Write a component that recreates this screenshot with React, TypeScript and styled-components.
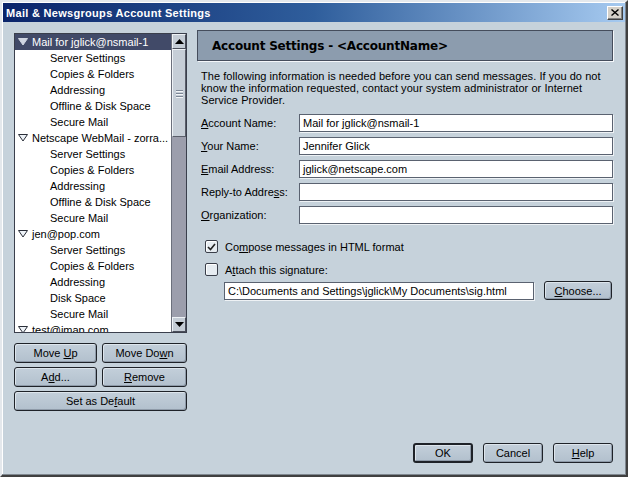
import React from "react";
import styled, { createGlobalStyle, css } from "styled-components";

const Global = createGlobalStyle`
  html, body { margin: 0; padding: 0; background: #c6d2db; }
  body { font-family: "Liberation Sans", Arial, sans-serif; font-size: 11px; color: #000; }
  * { box-sizing: border-box; }
`;

const FONT = `"Liberation Sans", Arial, sans-serif`;

const Frame = styled.div`
  width: 628px;
  height: 477px;
  display: flex;
  flex-direction: column;
  padding: 1px;
  border-style: solid;
  border-width: 2px;
  border-color: #e4e8ec #404040 #404040 #e4e8ec;
  box-shadow: inset -1px -1px 0 #808890, inset 1px 1px 0 #ffffff;
  background-color: #c6d2db;
  background-image: radial-gradient(rgba(255,255,255,0.18) 0.5px, transparent 0.6px);
  background-size: 2px 2px;
`;

const TitleBar = styled.div`
  height: 19px;
  flex: none;
  display: flex;
  align-items: center;
  justify-content: space-between;
  padding: 0 2px 0 3px;
  background: linear-gradient(90deg, #0a246a 0%, #2f5e9c 50%, #a6caf0 100%);
`;

const TitleText = styled.span`
  color: #fff;
  font-family: ${FONT};
  font-weight: bold;
  font-size: 11px;
  letter-spacing: 0.3px;
`;

const CloseBtn = styled.div`
  width: 16px;
  height: 14px;
  background: #d4d0c8;
  border-style: solid;
  border-width: 1px;
  border-color: #fff #404040 #404040 #fff;
  box-shadow: inset -1px -1px 0 #808080;
  display: flex;
  align-items: center;
  justify-content: center;
`;

const Body = styled.div`
  flex: 1;
  display: grid;
  grid-template-columns: 173px 1fr;
  column-gap: 10px;
  padding: 8px 12px 11px 11px;
  min-height: 0;
`;

const LeftCol = styled.div`
  display: flex;
  flex-direction: column;
  padding-top: 3px;
`;

const Tree = styled.div`
  height: 300px;
  border: 1px solid #3a3f4c;
  background: #fff;
  display: flex;
  overflow: hidden;
`;

const TreeRows = styled.div`
  flex: 1;
  display: flex;
  flex-direction: column;
  min-width: 0;
`;

const Row = styled.div<{ $level: number; $selected?: boolean }>`
  height: 16px;
  flex: none;
  display: flex;
  align-items: center;
  white-space: nowrap;
  font-family: ${FONT};
  font-size: 11px;
  padding-left: ${(p) => (p.$level === 0 ? 3 : 35)}px;
  ${(p) =>
    p.$selected &&
    css`
      background: #414a68;
      color: #fff;
    `}
`;

const Twisty = styled.svg`
  width: 10px;
  height: 8px;
  margin-right: 4px;
  flex: none;
`;

const ScrollBar = styled.div`
  width: 15px;
  flex: none;
  display: flex;
  flex-direction: column;
  background: #9c9eac;
  border-left: 1px solid #6c707c;
`;

const ScrollArrow = styled.div`
  height: 15px;
  flex: none;
  background: #c4ccd5;
  border-style: solid;
  border-width: 1px;
  border-color: #eef2f6 #4a4e5a #4a4e5a #eef2f6;
  display: flex;
  align-items: center;
  justify-content: center;
`;

const Thumb = styled.div`
  height: 88px;
  flex: none;
  background: #c6ced7;
  border-style: solid;
  border-width: 1px;
  border-color: #eef2f6 #5a5e6a #5a5e6a #eef2f6;
  display: flex;
  flex-direction: column;
  align-items: center;
  justify-content: center;
  gap: 2px;
`;

const Grip = styled.div`
  width: 7px;
  height: 1px;
  background: #7d8796;
  box-shadow: 0 1px 0 #f4f6f8;
`;

const Track = styled.div`
  flex: 1;
`;

const ButtonGrid = styled.div`
  margin-top: 10px;
  display: grid;
  grid-template-columns: 83px 85px;
  column-gap: 5px;
  row-gap: 4px;
`;

const Button = styled.button<{ $wide?: boolean; $default?: boolean }>`
  height: 20px;
  padding: 0;
  font-family: ${FONT};
  font-size: 11px;
  color: #000;
  background: linear-gradient(#c3cfda, #b2c0cd);
  border: 1px solid #1e2228;
  border-radius: 3px;
  box-shadow: inset 1px 1px 0 #dde5ec, inset -1px -1px 0 #8e9aa8;
  ${(p) => p.$wide && css`grid-column: 1 / span 2;`}
  ${(p) =>
    p.$default &&
    css`
      border-width: 2px;
    `}
  u { text-decoration: underline; }
`;

const RightCol = styled.div`
  display: flex;
  flex-direction: column;
`;

const Header = styled.div`
  height: 31px;
  flex: none;
  background: #8c9cae;
  border: 1px solid #454d5c;
  box-shadow: 1px 1px 0 #f4f7fa;
  display: flex;
  align-items: center;
  padding-left: 14px;
  font-family: "DejaVu Sans", Verdana, sans-serif;
  font-weight: bold;
  font-size: 12px;
  letter-spacing: -0.2px;
  color: #000;
`;

const Desc = styled.p`
  margin: 9px 0 0 4px;
  font-family: ${FONT};
  font-size: 11px;
  line-height: 12px;
  letter-spacing: 0.05px;
`;

const Form = styled.div`
  margin: 8px 0 0 4px;
  display: grid;
  grid-template-columns: 98px 1fr;
  row-gap: 5px;
  align-items: center;
`;

const Label = styled.label`
  font-family: ${FONT};
  font-size: 11px;
  white-space: nowrap;
`;

const TextBox = styled.div<{ $w?: number }>`
  height: 18px;
  ${(p) => (p.$w ? css`width: ${p.$w}px;` : "")}
  background: #fff;
  border: 1px solid #5a6270;
  box-shadow: 1px 1px 0 #eef2f5;
  display: flex;
  align-items: center;
  padding-left: 3px;
  font-family: ${FONT};
  font-size: 11px;
  white-space: nowrap;
  overflow: hidden;
`;

const Checks = styled.div`
  margin: 16px 0 0 8px;
  display: flex;
  flex-direction: column;
  gap: 10px;
`;

const CheckRow = styled.div`
  display: flex;
  align-items: center;
  gap: 7px;
  font-family: ${FONT};
  font-size: 11px;
`;

const Box = styled.div`
  width: 13px;
  height: 13px;
  background: #e6ecf1;
  border: 1px solid #3a3f4a;
  border-radius: 2px;
  box-shadow: inset 1px 1px 0 #fff;
  display: flex;
  align-items: center;
  justify-content: center;
`;

const SigRow = styled.div`
  margin: 5px 0 0 27px;
  display: flex;
  align-items: center;
  gap: 10px;
`;

const ChooseBtn = styled(Button)`
  width: 68px;
  height: 19px;
`;

const Footer = styled.div`
  margin-top: auto;
  display: flex;
  justify-content: flex-end;
  gap: 10px;
`;

const FooterBtn = styled(Button)`
  width: 60px;
`;

const Tri = ({ sel }: { sel?: boolean }) => (
  <Twisty viewBox="0 0 10 8">
    <polygon
      points="0.5,0.5 9.5,0.5 5,7"
      fill={sel ? "#d0d6e2" : "#eef3f8"}
      stroke={sel ? "#d0d6e2" : "#2a2e38"}
      strokeWidth="1"
    />
  </Twisty>
);

type Item = { t: string; l: number; sel?: boolean };
const items: Item[] = [
  { t: "Mail for jglick@nsmail-1", l: 0, sel: true },
  { t: "Server Settings", l: 1 },
  { t: "Copies & Folders", l: 1 },
  { t: "Addressing", l: 1 },
  { t: "Offline & Disk Space", l: 1 },
  { t: "Secure Mail", l: 1 },
  { t: "Netscape WebMail - zorra...", l: 0 },
  { t: "Server Settings", l: 1 },
  { t: "Copies & Folders", l: 1 },
  { t: "Addressing", l: 1 },
  { t: "Offline & Disk Space", l: 1 },
  { t: "Secure Mail", l: 1 },
  { t: "jen@pop.com", l: 0 },
  { t: "Server Settings", l: 1 },
  { t: "Copies & Folders", l: 1 },
  { t: "Addressing", l: 1 },
  { t: "Disk Space", l: 1 },
  { t: "Secure Mail", l: 1 },
  { t: "test@imap.com", l: 0 },
];

export default function App() {
  return (
    <>
      <Global />
      <Frame>
        <TitleBar>
          <TitleText>Mail &amp; Newsgroups Account Settings</TitleText>
          <CloseBtn>
            <svg width="8" height="7" viewBox="0 0 8 7">
              <path d="M0.5 0.5 L7.5 6.5 M7.5 0.5 L0.5 6.5" stroke="#000" strokeWidth="1.4" />
            </svg>
          </CloseBtn>
        </TitleBar>
        <Body>
          <LeftCol>
            <Tree>
              <TreeRows>
                {items.map((it, i) => (
                  <Row key={i} $level={it.l} $selected={it.sel}>
                    {it.l === 0 && <Tri sel={it.sel} />}
                    {it.t}
                  </Row>
                ))}
              </TreeRows>
              <ScrollBar>
                <ScrollArrow>
                  <svg width="9" height="5" viewBox="0 0 9 5">
                    <polygon points="0,5 9,5 4.5,0" fill="#000" />
                  </svg>
                </ScrollArrow>
                <Thumb>
                  <Grip />
                  <Grip />
                  <Grip />
                </Thumb>
                <Track />
                <ScrollArrow>
                  <svg width="9" height="5" viewBox="0 0 9 5">
                    <polygon points="0,0 9,0 4.5,5" fill="#000" />
                  </svg>
                </ScrollArrow>
              </ScrollBar>
            </Tree>
            <ButtonGrid>
              <Button>Move <u>U</u>p</Button>
              <Button>Move Do<u>w</u>n</Button>
              <Button>A<u>d</u>d...</Button>
              <Button><u>R</u>emove</Button>
              <Button $wide>Set as De<u>f</u>ault</Button>
            </ButtonGrid>
          </LeftCol>
          <RightCol>
            <Header>Account Settings - &lt;AccountName&gt;</Header>
            <Desc>
              The following information is needed before you can send messages. If you do not
              know the information requested, contact your system administrator or Internet
              Service Provider.
            </Desc>
            <Form>
              <Label><u>A</u>ccount Name:</Label>
              <TextBox>Mail for jglick@nsmail-1</TextBox>
              <Label><u>Y</u>our Name:</Label>
              <TextBox>Jennifer Glick</TextBox>
              <Label><u>E</u>mail Address:</Label>
              <TextBox>jglick@netscape.com</TextBox>
              <Label>Reply-to Addre<u>s</u>s:</Label>
              <TextBox />
              <Label><u>O</u>rganization:</Label>
              <TextBox />
            </Form>
            <Checks>
              <CheckRow>
                <Box>
                  <svg width="9" height="8" viewBox="0 0 9 8">
                    <path d="M1 4 L3.5 6.5 L8 1" stroke="#222" strokeWidth="1.6" fill="none" />
                  </svg>
                </Box>
                <span>Co<u>m</u>pose messages in HTML format</span>
              </CheckRow>
              <CheckRow>
                <Box />
                <span>A<u>t</u>tach this signature:</span>
              </CheckRow>
            </Checks>
            <SigRow>
              <TextBox $w={310}>C:\Documents and Settings\jglick\My Documents\sig.html</TextBox>
              <ChooseBtn><u>C</u>hoose...</ChooseBtn>
            </SigRow>
            <Footer>
              <FooterBtn $default>OK</FooterBtn>
              <FooterBtn>Cancel</FooterBtn>
              <FooterBtn><u>H</u>elp</FooterBtn>
            </Footer>
          </RightCol>
        </Body>
      </Frame>
    </>
  );
}
